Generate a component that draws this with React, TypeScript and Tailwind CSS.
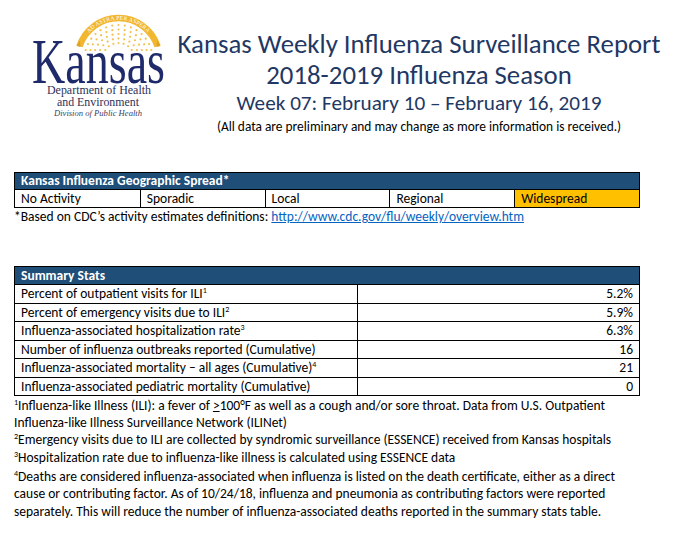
import React from "react";

const BODY = "font-['Carlito','Liberation_Sans',sans-serif]";

function Logo() {
  // gold arch of dots, ribbon with motto, serif wordmark
  const cx = 118.5;
  const cy = 59;
  const rows = [
    { r: 34, n: 15 },
    { r: 29.5, n: 13 },
    { r: 25, n: 11 },
    { r: 20.5, n: 9 },
    { r: 16, n: 7 },
  ];
  const dots: { x: number; y: number }[] = [];
  rows.forEach(({ r, n }) => {
    // keep dots above y = 50
    const lim = Math.asin(Math.min(1, 9 / r));
    const a0 = Math.PI + lim;
    const a1 = 2 * Math.PI - lim;
    for (let i = 0; i < n; i++) {
      const a = a0 + ((a1 - a0) * i) / (n - 1);
      dots.push({ x: cx + r * Math.cos(a), y: cy + r * Math.sin(a) });
    }
  });
  const arc = (r: number, from: number, to: number) => {
    const a0 = Math.PI * from;
    const a1 = Math.PI * to;
    return `M ${cx + r * Math.cos(a0)} ${cy + r * Math.sin(a0)} A ${r} ${r} 0 0 1 ${cx + r * Math.cos(a1)} ${cy + r * Math.sin(a1)}`;
  };

  return (
    <svg width="145" height="110" viewBox="28 12 145 110" className="block">
      <defs>
        <path id="motto" d={arc(39.3, 1.08, 1.92)} />
      </defs>
      <path d={arc(41, 1.1, 1.9)} fill="none" stroke="#f2b731" strokeWidth="6.5" />
      <path d="M 80.5 47 l -4 -1 l 3.5 -6 z" fill="#dfa324" />
      <path d="M 156.5 47 l 4 -1 l -3.5 -6 z" fill="#dfa324" />
      <text fontFamily="'Liberation Serif', serif" fontSize="5.6" fill="#ffffff" letterSpacing="0.25">
        <textPath href="#motto" startOffset="50%" textAnchor="middle">
          AD ASTRA PER ASPERA
        </textPath>
      </text>
      {dots.map((d, i) => (
        <circle key={i} cx={d.x} cy={d.y} r="1.1" fill="#f3c14e" />
      ))}
      <text
        x="32"
        y="83"
        fontFamily="'Liberation Serif', serif"
        fontSize="63"
        fill="#1f2a6b"
        textLength="133"
        lengthAdjust="spacingAndGlyphs"
      >
        Kansas
      </text>
      <text
        x="47"
        y="94"
        fontFamily="'Liberation Serif', serif"
        fontSize="11.5"
        fill="#2c3159"
        textLength="104"
        lengthAdjust="spacingAndGlyphs"
      >
        Department of Health
      </text>
      <text
        x="57"
        y="105.5"
        fontFamily="'Liberation Serif', serif"
        fontSize="11.5"
        fill="#2c3159"
        textLength="82"
        lengthAdjust="spacingAndGlyphs"
      >
        and Environment
      </text>
      <text
        x="54"
        y="116"
        fontFamily="'Liberation Serif', serif"
        fontSize="8"
        fontStyle="italic"
        fill="#3a3d63"
        textLength="88"
        lengthAdjust="spacingAndGlyphs"
      >
        Division of Public Health
      </text>
    </svg>
  );
}

const SPREAD = ["No Activity", "Sporadic", "Local", "Regional", "Widespread"];

const STATS: { label: string; sup?: string; value: string }[] = [
  { label: "Percent of outpatient visits for ILI", sup: "1", value: "5.2%" },
  { label: "Percent of emergency visits due to ILI", sup: "2", value: "5.9%" },
  { label: "Influenza-associated hospitalization rate", sup: "3", value: "6.3%" },
  { label: "Number of influenza outbreaks reported (Cumulative)", value: "16" },
  { label: "Influenza-associated mortality \u2013 all ages (Cumulative)", sup: "4", value: "21" },
  { label: "Influenza-associated pediatric mortality (Cumulative)", value: "0" },
];

export default function App() {
  return (
    <div className={`w-[676px] min-h-[535px] bg-white text-black ${BODY}`}>
      <div className="flex">
        <div className="w-[170px] pl-[28px] pt-[12px]">
          <Logo />
        </div>
        <div className="w-[498px] pt-[28px] text-center text-[#1f3864]">
          <div className="text-[26.8px] leading-[31px]">Kansas Weekly Influenza Surveillance Report</div>
          <div className="text-[26.8px] leading-[31px]">2018-2019 Influenza Season</div>
          <div className="text-[21.2px] leading-[27px]">Week 07: February 10 &ndash; February 16, 2019</div>
          <div className="text-[13.4px] leading-[20px] text-black">
            (All data are preliminary and may change as more information is received.)
          </div>
        </div>
      </div>

      <div className="pl-[14px] pt-[35px] text-[13.5px]">
        <div className="w-[626px] border border-black">
          <div className="h-[16px] bg-[#1f4e79] px-[6px] text-[13.5px] font-bold leading-[16px] text-white">
            Kansas Influenza Geographic Spread*
          </div>
          <div className="grid grid-cols-5 border-t border-black">
            {SPREAD.map((s, i) => (
              <div
                key={s}
                className={`h-[17px] px-[6px] leading-[17px] ${i > 0 ? "border-l border-black" : ""} ${
                  s === "Widespread" ? "bg-[#ffc000]" : ""
                }`}
              >
                {s}
              </div>
            ))}
          </div>
        </div>
        <div className="leading-[18px]">
          *Based on CDC&rsquo;s activity estimates definitions:{" "}
          <a href="#" className="text-[#0563c1] underline">
            http://www.cdc.gov/flu/weekly/overview.htm
          </a>
        </div>

        <div className="mt-[40px] w-[626px] border border-black">
          <div className="h-[17px] bg-[#1f4e79] px-[6px] font-bold leading-[17px] text-white">Summary Stats</div>
          {STATS.map((s) => (
            <div key={s.label} className="flex h-[18.5px] border-t border-black leading-[17.5px]">
              <div className="w-[343px] border-r border-black px-[6px]">
                {s.label}
                {s.sup && <sup className="text-[8px] -top-[5px]">{s.sup}</sup>}
              </div>
              <div className="flex-1 px-[6px] text-right">{s.value}</div>
            </div>
          ))}
        </div>

        <div className="pt-[1px] text-[13.5px] leading-[17.2px]">
          <p>
            <sup className="text-[8px] -top-[5px]">1</sup>Influenza-like Illness (ILI): a fever of <u>&gt;</u>100&deg;F as
            well as a cough and/or sore throat. Data from U.S. Outpatient
            <br />
            Influenza-like Illness Surveillance Network (ILINet)
          </p>
          <p>
            <sup className="text-[8px] -top-[5px]">2</sup>Emergency visits due to ILI are collected by syndromic
            surveillance (ESSENCE) received from Kansas hospitals
          </p>
          <p>
            <sup className="text-[8px] -top-[5px]">3</sup>Hospitalization rate due to influenza-like illness is calculated
            using ESSENCE data
          </p>
          <p className="mt-[2px] leading-[17.5px]">
            <sup className="text-[8px] -top-[5px]">4</sup>Deaths are considered influenza-associated when influenza is
            listed on the death certificate, either as a direct
            <br />
            cause or contributing factor. As of 10/24/18, influenza and pneumonia as contributing factors were reported
            <br />
            separately. This will reduce the number of influenza-associated deaths reported in the summary stats table.
          </p>
        </div>
      </div>
    </div>
  );
}
